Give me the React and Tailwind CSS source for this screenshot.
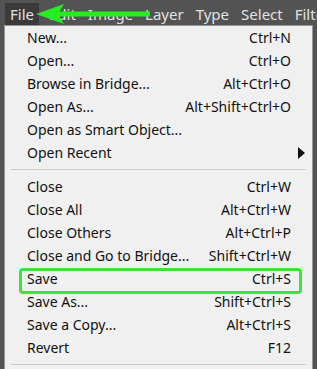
import React from "react";

const sections = [
  [
    { label: "New...", keys: "Ctrl+N" },
    { label: "Open...", keys: "Ctrl+O" },
    { label: "Browse in Bridge...", keys: "Alt+Ctrl+O" },
    { label: "Open As...", keys: "Alt+Shift+Ctrl+O" },
    { label: "Open as Smart Object...", keys: "" },
    { label: "Open Recent", keys: "", sub: true },
  ],
  [
    { label: "Close", keys: "Ctrl+W" },
    { label: "Close All", keys: "Alt+Ctrl+W" },
    { label: "Close Others", keys: "Alt+Ctrl+P" },
    { label: "Close and Go to Bridge...", keys: "Shift+Ctrl+W" },
    { label: "Save", keys: "Ctrl+S" },
    { label: "Save As...", keys: "Shift+Ctrl+S" },
    { label: "Save a Copy...", keys: "Alt+Ctrl+S" },
    { label: "Revert", keys: "F12" },
  ],
];

const menus = ["File", "Edit", "Image", "Layer", "Type", "Select", "Filter"];

function MenuRow({ item }) {
  return (
    <div className="h-[23px] flex items-center pl-[22px] pr-[21px] text-[14px] text-[#111]">
      <span className="flex-1 whitespace-nowrap">{item.label}</span>
      {item.keys && <span className="whitespace-nowrap">{item.keys}</span>}
      {item.sub && (
        <svg width="7" height="12" viewBox="0 0 7 12" className="mr-[-14px]">
          <path d="M0 0 L7 6 L0 12 Z" fill="#111" />
        </svg>
      )}
    </div>
  );
}

export default function App() {
  return (
    <div
      className="w-[317px] h-[369px] bg-[#535353] overflow-hidden relative"
      style={{ fontFamily: '"Noto Sans", "Open Sans", sans-serif' }}
    >
      {/* menu bar */}
      <div className="h-[25px] flex items-end pl-[5px] text-[15px] text-[#e2e2e2]">
        {menus.map((m, i) => (
          <div
            key={m}
            className={
              i === 0
                ? "h-[22px] flex items-center px-[5px] bg-[#3a3a3a] mr-[4px]"
                : "h-[22px] flex items-center px-[6px]"
            }
          >
            {m}
          </div>
        ))}
      </div>

      {/* dropdown */}
      <div className="ml-[4px] w-[309px] bg-[#f0f0f0] border border-[#979797] pb-[10px]">
        {sections.map((sec, si) => (
          <div key={si}>
            {si > 0 && <div className="mx-[6px] my-[5px] h-px bg-[#cdcdcd]" />}
            {sec.map((item) => (
              <MenuRow key={item.label} item={item} />
            ))}
          </div>
        ))}
        <div className="mx-[6px] mt-[5px] h-px bg-[#cdcdcd]" />
      </div>

      {/* save highlight */}
      <div className="absolute left-[19px] top-[268px] w-[283px] h-[26px] border-[3px] border-[#3be33b] rounded-[4px]" />

      {/* green arrow */}
      <svg className="absolute left-0 top-0" width="317" height="30" viewBox="0 0 317 30">
        <line x1="58" y1="14" x2="150" y2="14" stroke="#22ee22" strokeWidth="5" />
        <path d="M36 14 L64 4 L58 14 L64 24 Z" fill="#22ee22" />
      </svg>
    </div>
  );
}
